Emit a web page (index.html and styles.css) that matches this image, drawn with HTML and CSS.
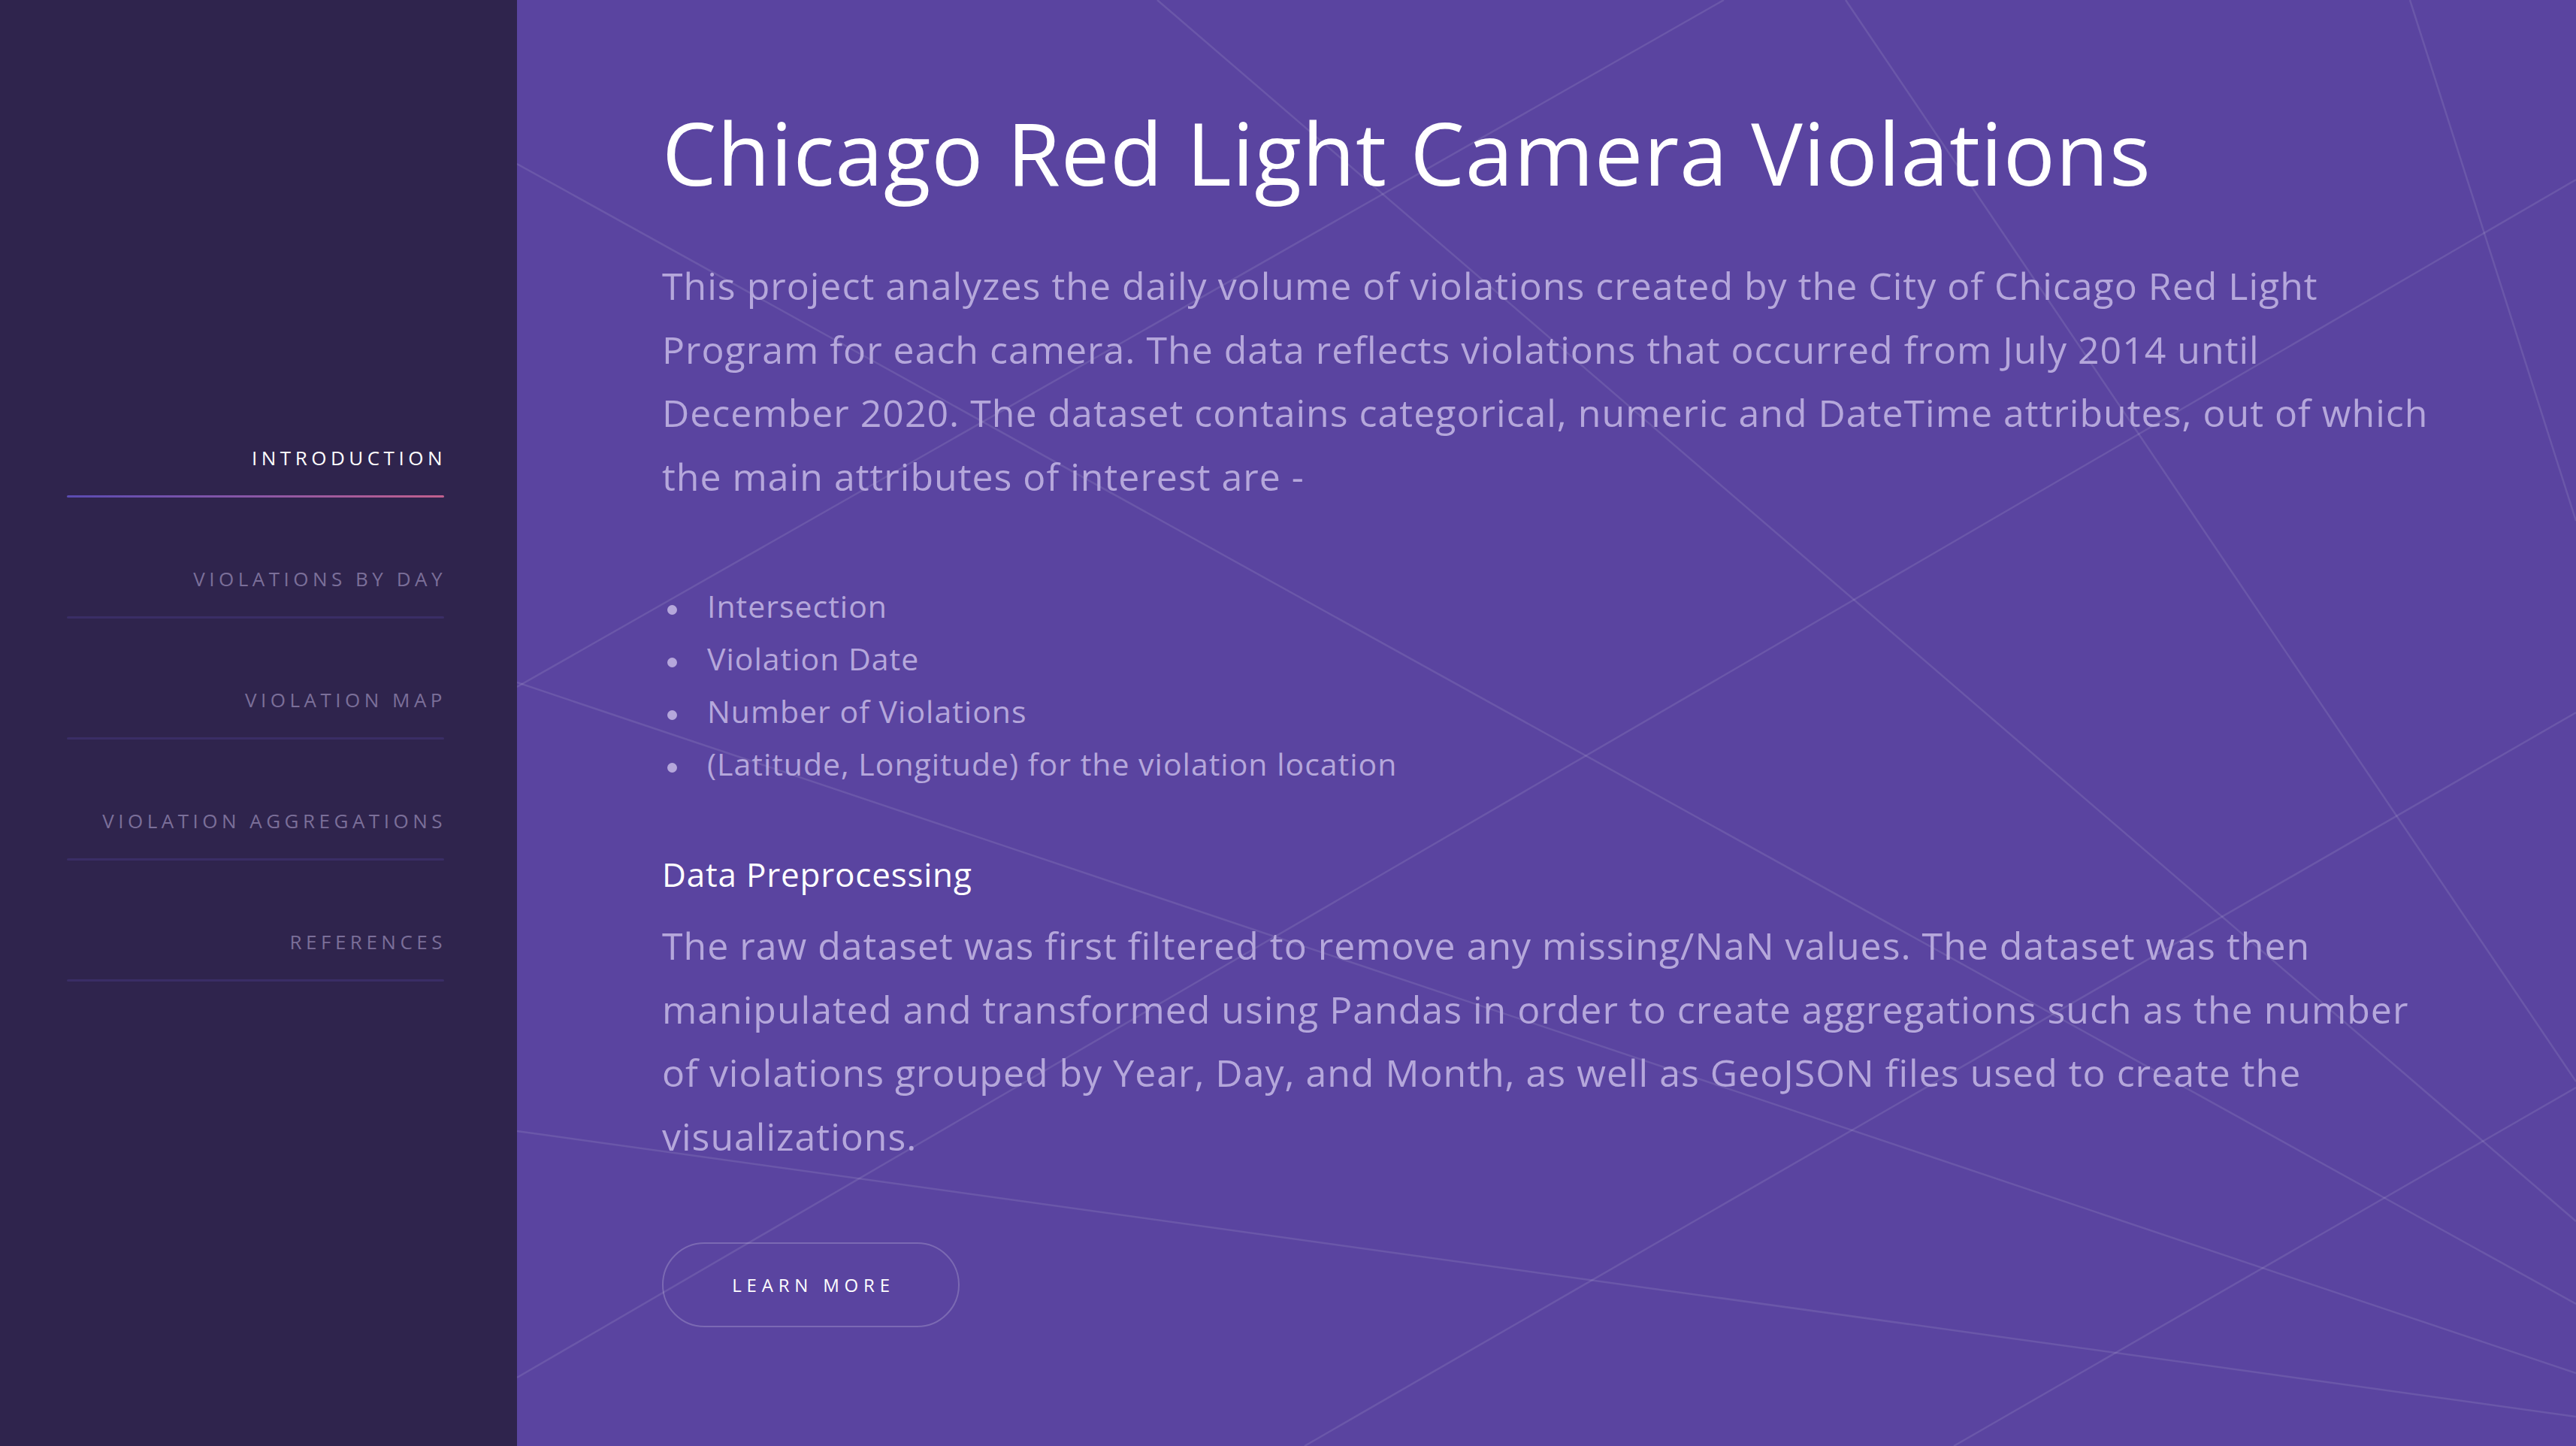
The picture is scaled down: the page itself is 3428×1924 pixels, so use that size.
FILE: index.html
```html
<!DOCTYPE html>
<html lang="en">
<head>
<meta charset="utf-8">
<title>Chicago Red Light Camera Violations</title>
<link rel="stylesheet" href="styles.css">
</head>
<body>
<div class="page">
  <aside class="sidebar">
    <nav class="nav">
      <a class="nav-item active" href="#intro"><span class="label">Introduction</span></a>
      <a class="nav-item" href="#day"><span class="label">Violations by Day</span></a>
      <a class="nav-item" href="#map"><span class="label">Violation Map</span></a>
      <a class="nav-item" href="#agg"><span class="label">Violation Aggregations</span></a>
      <a class="nav-item" href="#refs"><span class="label">References</span></a>
    </nav>
  </aside>
  <main class="main" id="intro">
    <svg class="bg-lines" viewBox="0 0 2740 1924" preserveAspectRatio="none" aria-hidden="true">
      <line x1="852" y1="0" x2="2740" y2="1625"/>
      <line x1="0" y1="218" x2="2740" y2="1735"/>
      <line x1="0" y1="914" x2="1606" y2="0"/>
      <line x1="1768" y1="0" x2="2740" y2="1439"/>
      <line x1="2519" y1="0" x2="2740" y2="693"/>
      <line x1="2740" y1="239" x2="0" y2="1833"/>
      <line x1="0" y1="908" x2="2740" y2="1827"/>
      <line x1="0" y1="1505" x2="2740" y2="1885"/>
      <line x1="2740" y1="948" x2="1048" y2="1924"/>
      <line x1="2740" y1="1447" x2="1912" y2="1924"/>
    </svg>
    <div class="content">
      <h1 class="title">Chicago Red Light Camera Violations</h1>
      <p class="lead">This project analyzes the daily volume of violations created by the City of Chicago Red Light<br>Program for each camera. The data reflects violations that occurred from July 2014 until<br>December 2020. The dataset contains categorical, numeric and DateTime attributes, out of which<br>the main attributes of interest are -</p>
      <ul class="attrs">
        <li>Intersection</li>
        <li>Violation Date</li>
        <li>Number of Violations</li>
        <li>(Latitude, Longitude) for the violation location</li>
      </ul>
      <h3 class="subhead">Data Preprocessing</h3>
      <p class="lead lead-tight">The raw dataset was first filtered to remove any missing/NaN values. The dataset was then<br>manipulated and transformed using Pandas in order to create aggregations such as the number<br>of violations grouped by Year, Day, and Month, as well as GeoJSON files used to create the<br>visualizations.</p>
      <a class="btn" href="#day">Learn More</a>
    </div>
  </main>
</div>
</body>
</html>
```

FILE: styles.css
```css
* {
  box-sizing: border-box;
}

html, body {
  margin: 0;
  padding: 0;
}

body {
  font-family: "Open Sans", "Liberation Sans", sans-serif;
  background: #5a44a0;
}

.page {
  display: flex;
  width: 100%;
  height: 100vh;
  min-height: 1924px;
}

/* ---------- sidebar ---------- */
.sidebar {
  flex: 0 0 688px;
  background: #2f244d;
  padding: 594px 0 0 89px;
}

.nav {
  width: 502px;
  display: flex;
  flex-direction: column;
}

.nav-item {
  display: block;
  text-align: right;
  text-decoration: none;
  text-transform: uppercase;
  font-size: 26px;
  line-height: 30px;
  letter-spacing: 5.5px;
  color: #7b6f99;
  margin-bottom: 93px;
}

.nav-item .label {
  margin-right: -3px;
}

.nav-item::after {
  content: "";
  display: block;
  height: 3px;
  margin-top: 35px;
  border-radius: 2px;
  background: #3a2d66;
}

.nav-item.active {
  color: #ffffff;
}

.nav-item.active::after {
  background: linear-gradient(90deg, #5a4bb2 0%, #8a57a6 50%, #c2608e 100%);
}

/* ---------- main ---------- */
.main {
  flex: 1 1 auto;
  position: relative;
  overflow: hidden;
  background: #5a44a0;
}

.bg-lines {
  position: absolute;
  left: 0;
  top: 0;
  width: 100%;
  height: 100%;
  stroke: rgba(255, 255, 255, 0.1);
  stroke-width: 2.5;
  fill: none;
}

.content {
  position: relative;
  padding: 134px 188px 0 193px;
}

.title {
  margin: 0;
  font-size: 115px;
  line-height: 1.2;
  font-weight: 400;
  letter-spacing: 0.8px;
  color: #ffffff;
  white-space: nowrap;
}

.lead {
  margin: 66px 0 0;
  font-size: 50px;
  line-height: 84.5px;
  font-weight: 400;
  letter-spacing: 1px;
  color: #b5a7db;
  white-space: nowrap;
}

.attrs {
  list-style: none;
  margin: 95px 0 0;
  padding: 0;
}

.attrs li {
  font-size: 41px;
  line-height: 70px;
  letter-spacing: 1px;
  color: #b5a7db;
  white-space: nowrap;
}

.attrs li::before {
  content: "";
  display: inline-block;
  width: 13px;
  height: 13px;
  border-radius: 50%;
  background: #b5a7db;
  vertical-align: middle;
  margin: 0 40px 0 7px;
}

.subhead {
  margin: 86px 0 0;
  font-size: 44px;
  line-height: 52px;
  font-weight: 500;
  letter-spacing: 0.8px;
  color: #ffffff;
}

.lead-tight {
  margin-top: 27px;
}

.btn {
  margin-top: 99px;
  display: inline-flex;
  align-items: center;
  justify-content: center;
  width: 396px;
  height: 113px;
  padding-left: 7px;
  border: 2px solid rgba(255, 255, 255, 0.2);
  border-radius: 57px;
  color: #ffffff;
  text-decoration: none;
  text-transform: uppercase;
  font-size: 24px;
  font-weight: 500;
  letter-spacing: 6.8px;
}
```
